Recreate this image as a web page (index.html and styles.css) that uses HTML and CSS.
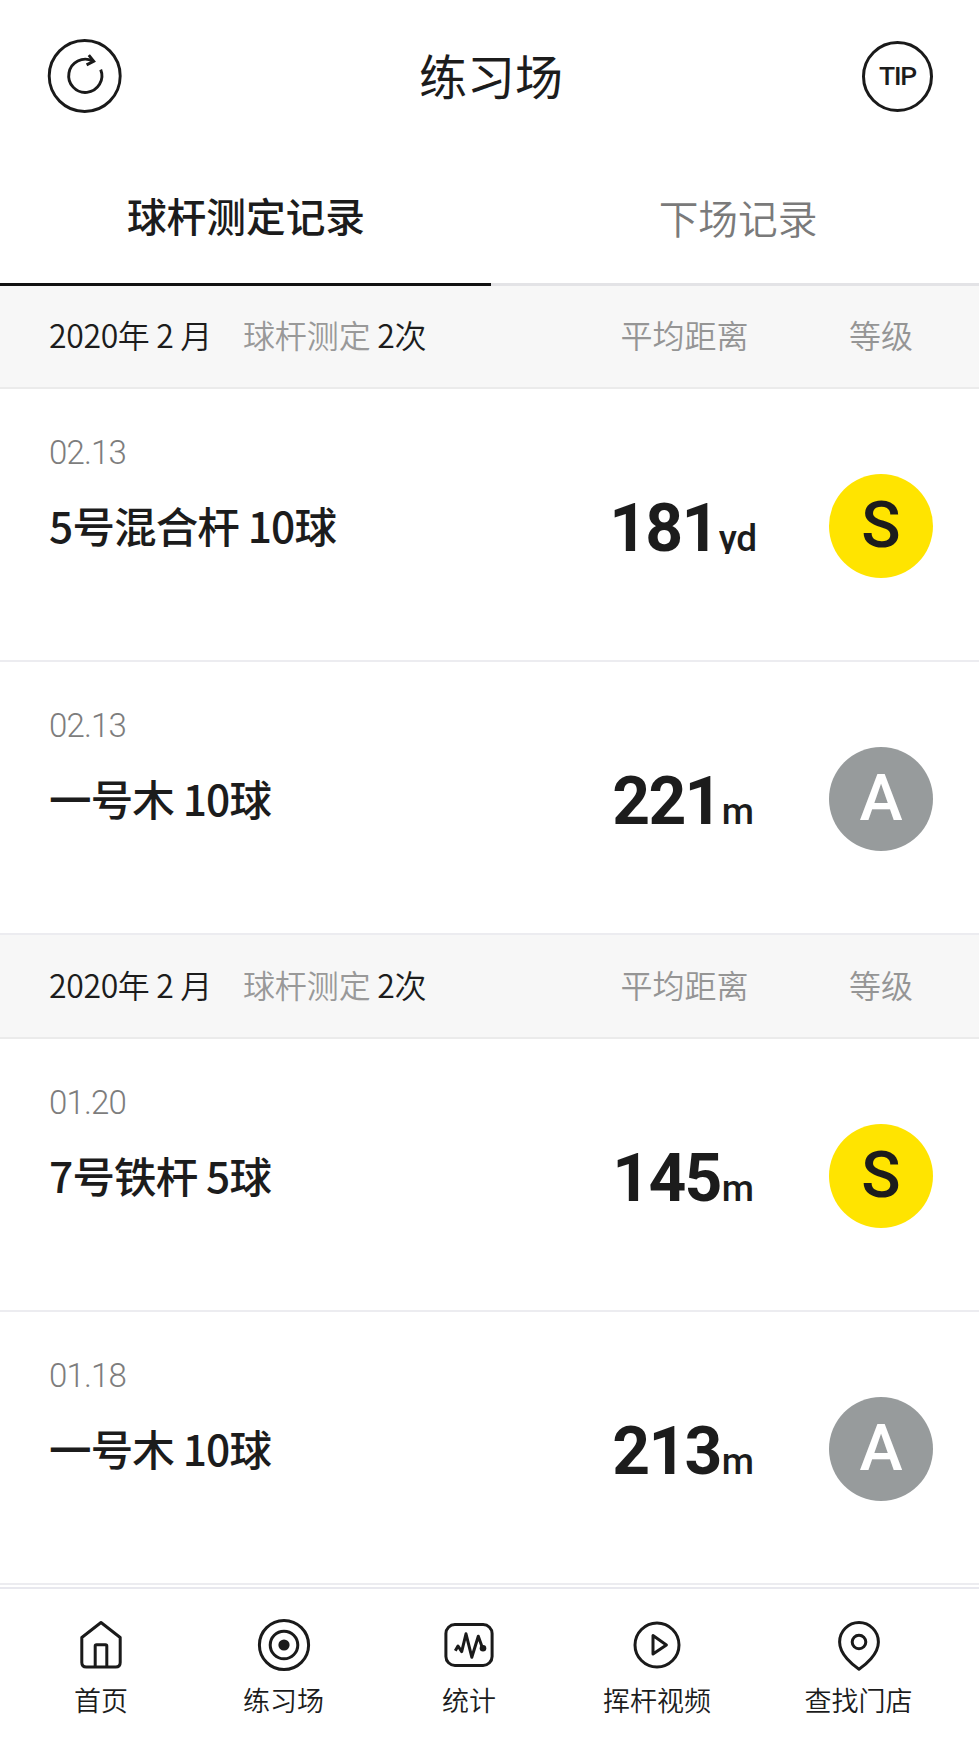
FILE: index.html
```html
<!DOCTYPE html>
<html lang="zh-CN">
<head>
<meta charset="utf-8">
<title>练习场</title>
<link rel="stylesheet" href="styles.css">
</head>
<body>
<header class="topbar">
  <svg class="refresh" viewBox="0 0 76 76" width="76" height="76">
    <circle cx="37.7" cy="38" r="35.5"/>
    <path d="M53.7 31.6A16.6 16.6 0 1 1 45.6 22.9"/>
    <path d="M41.8 17.2L46.7 23.2L39.6 26.9"/>
  </svg>
  <h1 class="title">练习场</h1>
  <button class="tip">TIP</button>
</header>
<nav class="tabs">
  <a class="tab tab-active">球杆测定记录</a>
  <a class="tab">下场记录</a>
</nav>
<main class="records">
  <section>
    <div class="month">
      <p class="month-label">2020年 2 月<span class="month-type">球杆测定</span> 2次</p>
      <span class="col-distance">平均距离</span>
      <span class="col-grade">等级</span>
    </div>
    <article class="record">
      <div class="info"><time class="date">02.13</time><h2 class="club">5号混合杆 10球</h2></div>
      <p class="distance">181<span class="unit unit-yd">yd</span></p>
      <span class="grade grade-s">S</span>
    </article>
    <article class="record">
      <div class="info"><time class="date">02.13</time><h2 class="club">一号木 10球</h2></div>
      <p class="distance">221<span class="unit">m</span></p>
      <span class="grade grade-a">A</span>
    </article>
  </section>
  <section>
    <div class="month">
      <p class="month-label">2020年 2 月<span class="month-type">球杆测定</span> 2次</p>
      <span class="col-distance">平均距离</span>
      <span class="col-grade">等级</span>
    </div>
    <article class="record">
      <div class="info"><time class="date">01.20</time><h2 class="club">7号铁杆 5球</h2></div>
      <p class="distance">145<span class="unit">m</span></p>
      <span class="grade grade-s">S</span>
    </article>
    <article class="record">
      <div class="info"><time class="date">01.18</time><h2 class="club">一号木 10球</h2></div>
      <p class="distance">213<span class="unit">m</span></p>
      <span class="grade grade-a">A</span>
    </article>
  </section>
</main>
<footer class="navbar">
  <a class="nav-item">
    <svg class="icon" viewBox="0 0 56 56"><path d="M28 5.5L8.8 20.5V45.5Q8.8 50 13.3 50H42.7Q47.2 50 47.2 45.5V20.5Z"/><path d="M22.2 50V29Q22.2 27.7 23.5 27.7H32.5Q33.8 27.7 33.8 29V50"/></svg>
    <span>首页</span>
  </a>
  <a class="nav-item">
    <svg class="icon" viewBox="0 0 56 56"><circle cx="28" cy="28" r="24.6"/><circle cx="28" cy="28" r="13.8"/><circle class="dot" cx="28" cy="28" r="5.6"/></svg>
    <span>练习场</span>
  </a>
  <a class="nav-item">
    <svg class="icon" viewBox="0 0 56 56"><rect x="4.9" y="7.6" width="46.2" height="40.8" rx="9"/><path d="M14.3 33.8L17 29L20.7 34.6L25 16.8L30.8 40.2L37.3 19.2L41.5 31"/><circle class="dot" cx="42" cy="31.3" r="3.3"/></svg>
    <span>统计</span>
  </a>
  <a class="nav-item">
    <svg class="icon" viewBox="0 0 56 56"><circle cx="28" cy="28" r="22"/><path d="M24 18.6V37L37.4 27.9Z"/></svg>
    <span>挥杆视频</span>
  </a>
  <a class="nav-item">
    <svg class="icon" viewBox="0 0 56 56"><path d="M28 52.2C22 48.3 8.6 37.5 8.6 25A19.4 19.4 0 0 1 47.4 25C47.4 37.5 34 48.3 28 52.2Z"/><circle cx="28" cy="25" r="6.8"/></svg>
    <span>查找门店</span>
  </a>
</footer>
</body>
</html>
```
FILE: styles.css
```css
* { box-sizing: border-box; }
body {
  margin: 0;
  height: 1740px;
  background: #fff;
  color: #1c1c1c;
  font-family: "Noto Sans CJK SC", sans-serif;
  overflow: hidden;
}
h1, h2, p { margin: 0; font-weight: 400; }

.topbar {
  display: grid;
  grid-template-columns: 200px 1fr 200px;
  align-items: center;
  height: 152px;
  padding: 0 46px 0 47px;
}
.refresh { fill: none; stroke: #1a1a1a; stroke-width: 2.9; }
.title { padding: 0 0 4px 2px; font-size: 48px; line-height: 70px; text-align: center; }
.tip {
  justify-self: end;
  width: 71px;
  height: 71px;
  padding: 1px 0 0;
  border: 3px solid #1a1a1a;
  border-radius: 50%;
  background: none;
  color: #1c1c1c;
  font: 500 26.5px/1 Roboto, sans-serif;
  letter-spacing: -1.2px;
}

.tabs { display: grid; grid-template-columns: 491px 1fr; height: 134px; }
.tab {
  padding: 36px 0 0 6px;
  border-bottom: 3px solid #e3e3e6;
  color: #7a7a7a;
  font-size: 39.7px;
  line-height: 58px;
  font-weight: 350;
  text-align: center;
}
.tab-active { padding: 34px 0 0 1px; border-color: #111; color: #1c1c1c; font-weight: 500; }

.month, .record {
  display: grid;
  grid-template-columns: 1fr 290px 104px;
  align-items: center;
  padding: 0 46px 0 49px;
}
.records { margin-top: -1px; }
.month {
  height: 104px;
  padding-bottom: 5px;
  background: #f7f7f7;
  border-bottom: 2px solid #ebebeb;
  font-size: 32px;
  line-height: 46px;
}
.month-label { font-weight: 350; letter-spacing: -.35px; white-space: nowrap; }
.month-type { margin-left: 31px; color: #999; letter-spacing: -.1px; }
.col-distance, .col-grade { color: #959595; font-weight: 350; text-align: center; }
.col-distance { padding-left: 1px; }

.record { height: 273px; border-bottom: 2px solid #ececf0; }
.info { align-self: start; padding-top: 44px; }
.date {
  display: block;
  color: #7d7d7d;
  font: 300 33px/40px Roboto, sans-serif;
  letter-spacing: -.8px;
}
.club { margin-top: 21px; font-size: 42.5px; line-height: 62px; font-weight: 500; letter-spacing: -.85px; white-space: nowrap; }
.distance {
  padding: 9px 2px 0 0;
  font: 700 66px/78px Roboto, sans-serif;
  letter-spacing: -1.7px;
  text-align: center;
}
.unit { display: inline-block; margin-left: 1px; font-size: 37px; line-height: 40px; font-weight: 500; letter-spacing: -.3px; }
.unit-yd { clip-path: inset(0 0 5px 0); }
.grade {
  width: 104px;
  height: 104px;
  margin-top: 2px;
  border-radius: 50%;
  font: 500 65px/103px Roboto, sans-serif;
  text-align: center;
}
.grade-s { background: #ffe400; }
.grade-a { background: #979b9c; color: #fff; }

.navbar {
  display: grid;
  grid-template-columns: 202px 163px 208px 168px 235px;
  height: 152px;
  margin-top: 2px;
  padding-top: 28px;
  border-top: 2px solid #e8e8ee;
}
.nav-item { display: flex; flex-direction: column; align-items: center; gap: 7px; font-size: 27px; line-height: 40px; font-weight: 350; }
.icon { width: 56px; height: 56px; fill: none; stroke: #1a1a1a; stroke-width: 3; stroke-linejoin: round; }
.dot { fill: #1a1a1a; stroke: none; }
```
